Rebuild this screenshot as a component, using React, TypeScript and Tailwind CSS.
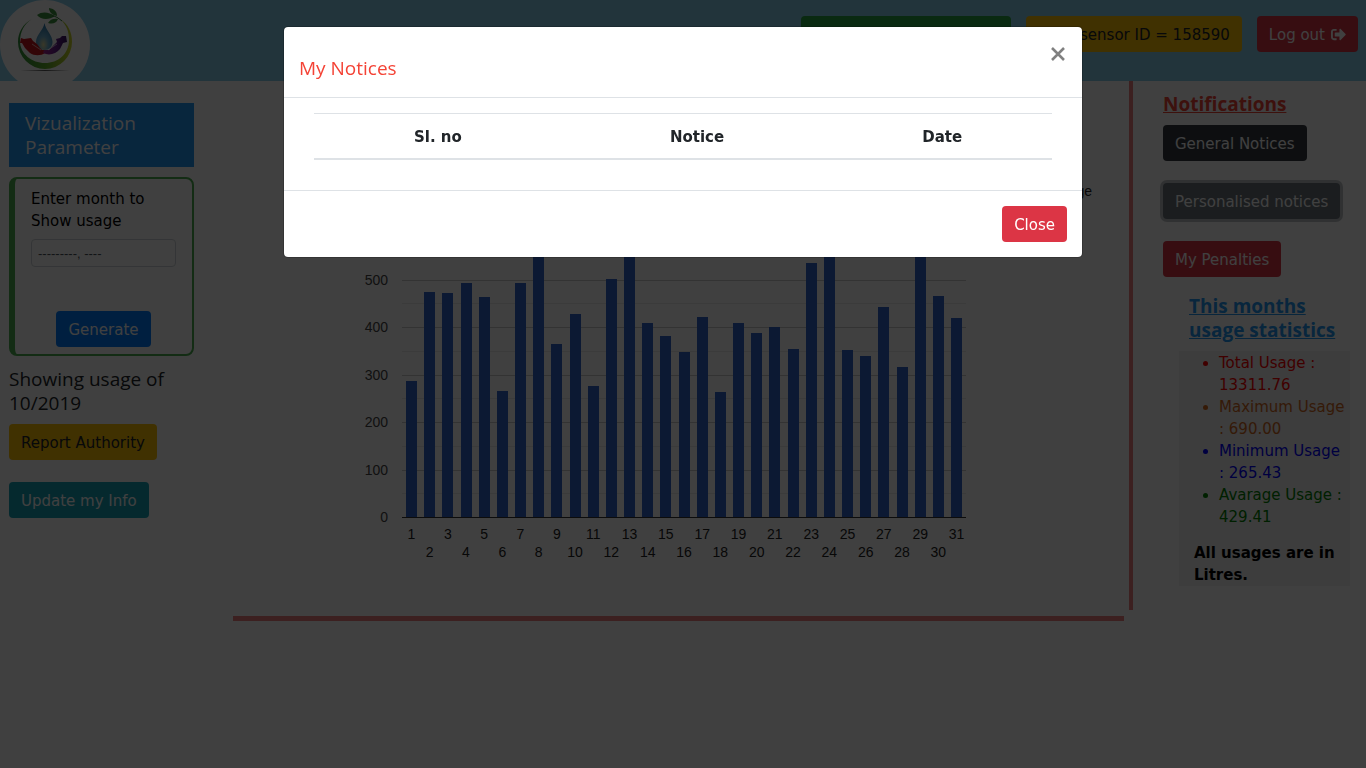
import { FaSignOutAlt } from "react-icons/fa";
import type { ButtonHTMLAttributes } from "react";

const btn =
  "inline-flex h-9 cursor-pointer items-center gap-1.5 rounded px-3 pt-px text-[15px] leading-[22px] whitespace-nowrap";

const heading = "font-['Open_Sans','Noto_Sans',sans-serif] text-[19px] leading-6";

const usage = [
  286, 474, 472, 493, 463, 265.43, 493, 690, 365, 428, 276, 502, 640, 409, 381, 348, 421, 264, 409, 388, 400, 354,
  535, 610, 352, 339, 443, 316, 620, 466, 419,
];

function Button({ className = "", ...rest }: ButtonHTMLAttributes<HTMLButtonElement>) {
  return <button type="button" className={`${btn} ${className}`} {...rest} />;
}

function Logo() {
  return (
    <svg viewBox="0 0 90 90" className="h-[90px] w-[90px] shrink-0" role="img" aria-label="Water saving logo">
      <defs>
        <linearGradient id="ring" x1="0" y1="0" x2="1" y2="0">
          <stop offset="0" stopColor="#2f8f3a" />
          <stop offset="0.5" stopColor="#5fae2e" />
          <stop offset="1" stopColor="#cfd62a" />
        </linearGradient>
        <radialGradient id="drop" cx="0.45" cy="0.8" r="0.75">
          <stop offset="0" stopColor="#e6dfa0" />
          <stop offset="0.4" stopColor="#6fb0d0" />
          <stop offset="1" stopColor="#2a78ae" />
        </radialGradient>
        <linearGradient id="right-hand" x1="0" y1="0" x2="1" y2="0">
          <stop offset="0" stopColor="#a8248c" />
          <stop offset="0.5" stopColor="#6a2090" />
          <stop offset="1" stopColor="#35135e" />
        </linearGradient>
        <radialGradient id="shade">
          <stop offset="0" stopColor="#555" />
          <stop offset="1" stopColor="#fff" />
        </radialGradient>
      </defs>
      <circle cx="45" cy="45" r="45" fill="#fff" />
      <ellipse cx="45" cy="70.5" rx="25" ry="1" fill="url(#shade)" />
      <path
        d="M32 19C23 24 18 32 18 42a27 27 0 0 0 54 0c0-10-4-18-12-23 7 6 9 13 9 21 0 14-11 23-24 23S20 54 20 41c0-9 4-17 12-22Z"
        fill="url(#ring)"
      />
      <path d="M37 15c5-4 12-3 18 1-6 4-14 4-18-1Z" fill="#3f9440" />
      <path d="M49 8c6 1 8 4 8 8-5-1-8-4-8-8Z" fill="#3f9440" />
      <path d="M48 23c2-4 6-5 10-4-2 5-6 5-10 4Z" fill="#3f9440" />
      <path d="M52 16c4 0 6 2 10 5" fill="none" stroke="#2d7b36" strokeWidth="1" />
      <path d="M44.500 23c1 7 8 12 8 19 0 5-3.500 8-8 8s-8.500-3-8.500-8c0-7 7.500-12 8.500-19Z" fill="url(#drop)" />
      <path
        d="M21 38l3 1 7-1 2 3 4 3 3 4 2 2h4l-1 3c-4 3-11 3-15 0l-5-5-3-5-2 0Z"
        fill="#c8161c"
      />
      <path
        d="M67 42l-4 1-3 6c-4 5-11 7-17 4l1-3 5 0 5-5 3-3-1-3 4-1 2-2 4 0Z"
        fill="url(#right-hand)"
      />
      <path d="M32 44l9 6M57 44l-9 6" stroke="#fff" strokeWidth="0.6" fill="none" />
    </svg>
  );
}

function UsageChart() {
  const base = 436;
  const left = 169;
  const step = 545 / 30;
  return (
    <svg
      viewBox="0 0 891 535"
      className="block w-full"
      role="img"
      aria-label="Daily water usage"
      fontFamily="'Liberation Sans', Arial, sans-serif"
      fontSize="14"
    >
      {Array.from({ length: 15 }, (_, i) => {
        const y = Math.round(base - i * 23.75);
        return (
          <rect key={i} x={left} y={y} width="564" height="1" fill={i % 2 ? "#ebebeb" : "#cccccc"} />
        );
      })}
      {Array.from({ length: 8 }, (_, i) => (
        <text key={i} x="155" y={Math.round(base - i * 47.5) + 5} textAnchor="end" fill="#444">
          {i * 100}
        </text>
      ))}
      {usage.map((value, i) => {
        const h = Math.round(value * 0.475);
        const x = Math.round(173 + i * step);
        return (
          <g key={i}>
            <rect x={x} y={base - h} width="11" height={h} fill="#3366cc" />
            <text x={178.5 + i * step} y={i % 2 ? 476 : 458} textAnchor="middle" fill="#222">
              {i + 1}
            </text>
          </g>
        );
      })}
      <rect x={left} y={base} width="564" height="1" fill="#333" />
      <rect x="791" y="104" width="24" height="12" fill="#3366cc" />
      <text x="859" y="115" textAnchor="end" fill="#222">
        Usage
      </text>
    </svg>
  );
}

export default function App() {
  return (
    <div className="min-h-screen bg-white font-['DejaVu_Sans',Verdana,sans-serif] text-[15px] leading-[22px] text-black">
      <header className="flex h-[81px] items-start justify-between overflow-hidden bg-[#87ceeb] pr-2">
        <Logo />
        <div className="flex gap-[15px] pt-4">
          <Button className="w-[210px] justify-center bg-[#28a745] text-white">Welcome</Button>
          <Button className="min-w-[216px] justify-end bg-[#ffc107] text-[#212529]">Your sensor ID = 158590</Button>
          <Button className="bg-[#dc3545] text-white">
            Log out <FaSignOutAlt className="text-[15px]" />
          </Button>
        </div>
      </header>

      <div className="flex items-start">
        <aside className="w-[194px] shrink-0 pt-[22px] pl-[9px]">
          <h2 className={`${heading} bg-[#2196f3] px-4 py-2 text-white`}>Vizualization Parameter</h2>
          <form className="mt-[10px] rounded-lg border-2 border-l-[6px] border-[#4caf50] px-4 pt-[9px] pb-[7px]">
            <label htmlFor="month" className="block">
              Enter month to Show usage
            </label>
            <input
              id="month"
              type="text"
              placeholder="---------, ----"
              className="mt-[7px] block h-7 w-full rounded border border-[#ced4da] bg-white px-[6px] font-['Liberation_Sans',Arial,sans-serif] text-[13px] placeholder:text-[#495057]"
            />
            <div className="mt-11 flex justify-center">
              <Button className="bg-[#007bff] text-white">Generate</Button>
            </div>
          </form>
          <h2 className={`${heading} mt-[11px] text-[#212529]`}>
            Showing usage of 10/2019
          </h2>
          <div className="mt-[9px] flex flex-col items-start gap-[22px]">
            <Button className="bg-[#ffc107] text-[#212529]">Report Authority</Button>
            <Button className="bg-[#17a2b8] text-white">Update my Info</Button>
          </div>
        </aside>

        <main className="mr-[5px] ml-[39px] min-w-0 flex-1 border-b-[5px] border-[#f08080]">
          <UsageChart />
        </main>

        <aside className="w-[237px] shrink-0 border-l-4 border-[#f08080] pt-[11px] pr-4 pb-6 pl-[30px]">
          <h2 className={`${heading} font-bold text-[#f44336] underline`}>Notifications</h2>
          <div className="mt-[9px] flex flex-col items-start gap-[22px]">
            <Button className="bg-[#343a40] text-white">General Notices</Button>
            <Button className="bg-[#6c757d] text-white ring-3 ring-[#828a91]/50">Personalised notices</Button>
            <Button className="bg-[#dc3545] text-white">My Penalties</Button>
          </div>
          <h2 className={`${heading} mt-[17px] pl-[26px] font-bold text-[#2196f3] underline`}>
            This months usage statistics
          </h2>
          <div className="mt-[9px] ml-4 bg-[#f1f1f1] pt-px">
            <ul className="list-disc pr-1 pl-10">
              <li className="text-[#ff0000]">Total Usage : 13311.76</li>
              <li className="text-[#d2691e]">Maximum Usage : 690.00</li>
              <li className="text-[#0000ff]">Minimum Usage : 265.43</li>
              <li className="text-[#008000]">Avarage Usage : 429.41</li>
            </ul>
            <p className="mt-[14px] pl-[15px] font-bold">All usages are in Litres.</p>
          </div>
        </aside>
      </div>

      <div className="fixed inset-0 flex items-start justify-center bg-black/75 pt-[26px]">
        <section
          role="dialog"
          aria-modal="true"
          aria-labelledby="notices-title"
          className="w-full max-w-[800px] rounded-[5px] border border-black/20 bg-white bg-clip-padding"
        >
          <div className="flex items-start justify-between border-b border-[#dee2e6] px-[15px] pt-[15px] pb-[17px]">
            <h2 id="notices-title" className={`${heading} pt-[14px] text-[#f44336]`}>
              My Notices
            </h2>
            <button type="button" aria-label="Close" className="cursor-pointer p-[2px] pt-[5px] text-[#808080]">
              <svg viewBox="0 0 14 14" className="h-[14px] w-[14px]" stroke="currentColor" strokeWidth="2.6">
                <path d="M1 1l12 12M13 1L1 13" />
              </svg>
            </button>
          </div>
          <div className="px-[30px] pt-[15px] pb-[30px]">
            <table className="w-full border-collapse text-[#212529]">
              <thead>
                <tr className="border-t border-b-2 border-[#dee2e6]">
                  <th className="px-[11px] pt-3 pb-[10px]">Sl. no</th>
                  <th className="px-[11px] pt-3 pb-[10px]">Notice</th>
                  <th className="px-[11px] pt-3 pb-[10px]">Date</th>
                </tr>
              </thead>
            </table>
          </div>
          <div className="flex justify-end border-t border-[#dee2e6] p-[15px]">
            <Button className="bg-[#dc3545] text-white">Close</Button>
          </div>
        </section>
      </div>
    </div>
  );
}
